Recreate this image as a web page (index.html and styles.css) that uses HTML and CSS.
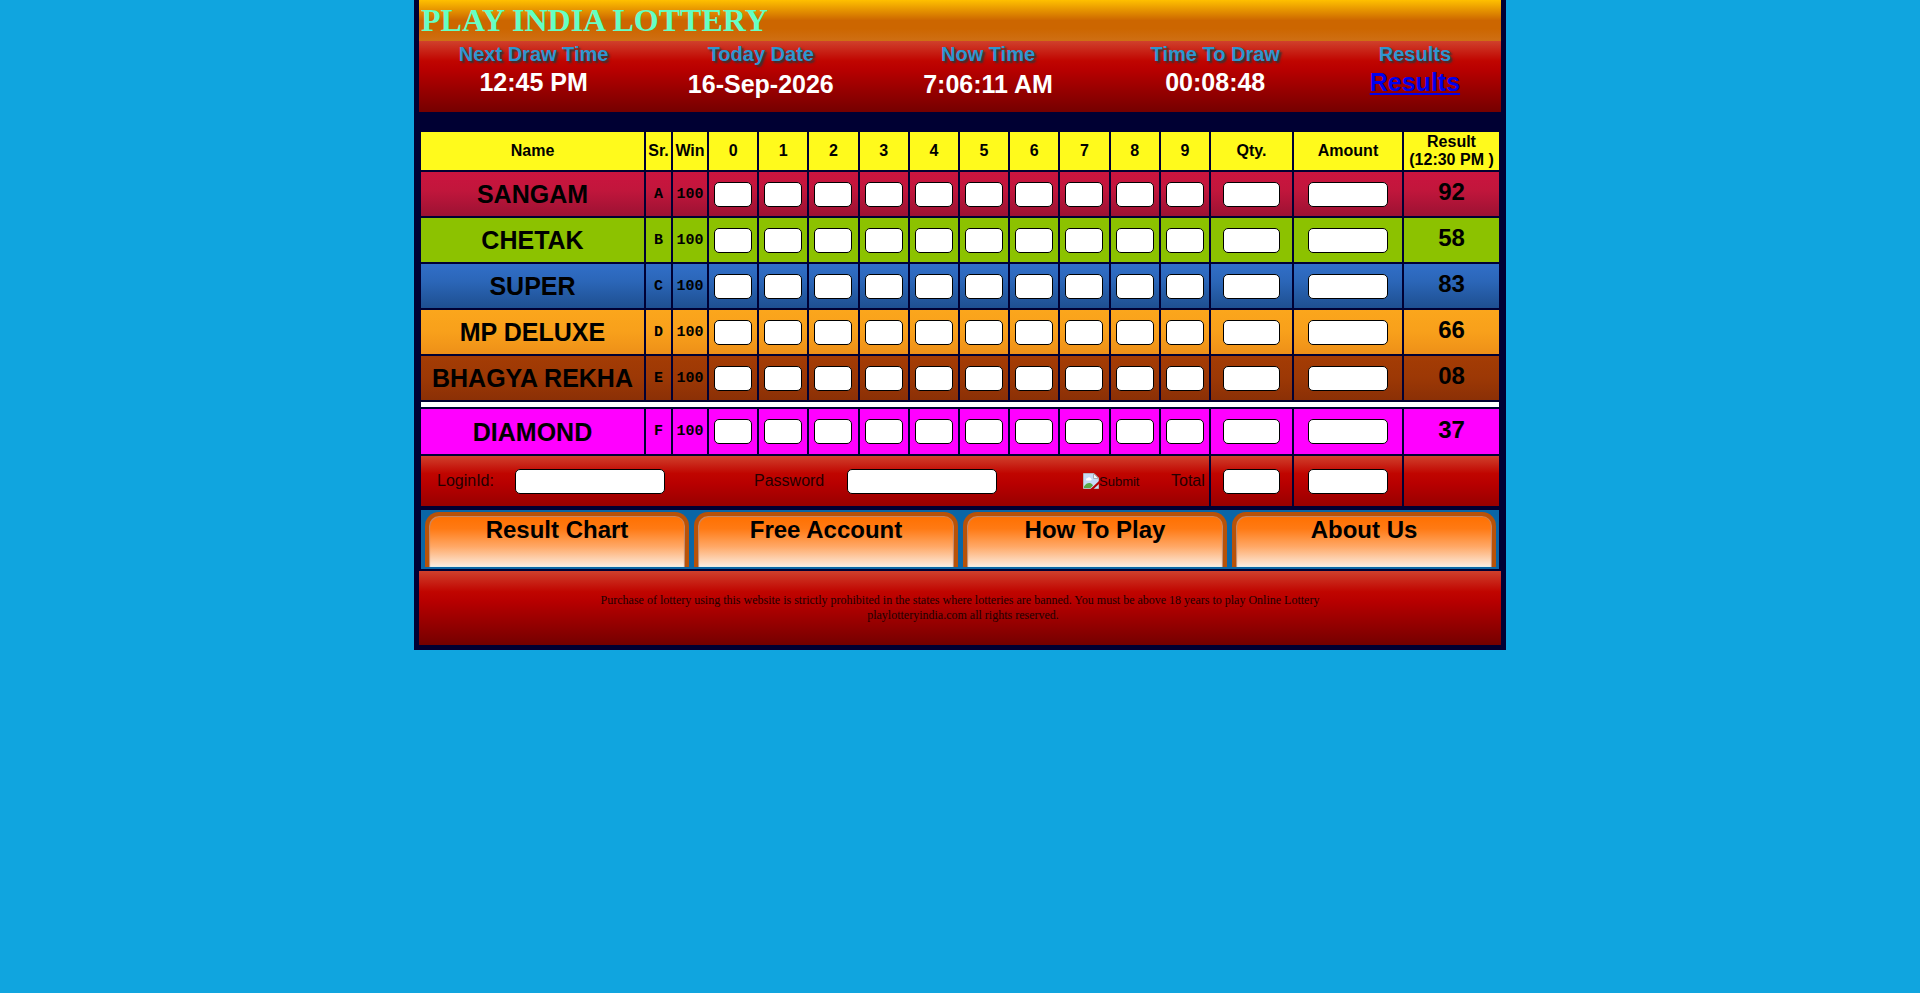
FILE: index.html
```html
<!DOCTYPE html>
<html lang="en">
<head>
<meta charset="utf-8">
<title>Play India Lottery</title>
<link rel="stylesheet" href="styles.css">
</head>
<body>
<main class="page">
  <h1 class="title">PLAY INDIA LOTTERY</h1>
  <section class="stats">
    <div class="stat"><h2 class="stat-label">Next Draw Time</h2><span class="stat-value">12:45 PM</span></div>
    <div class="stat"><h2 class="stat-label">Today Date</h2><span class="stat-value low">16-Sep-2026</span></div>
    <div class="stat"><h2 class="stat-label">Now Time</h2><span class="stat-value low">7:06:11 AM</span></div>
    <div class="stat"><h2 class="stat-label">Time To Draw</h2><span class="stat-value">00:08:48</span></div>
    <div class="stat"><h2 class="stat-label">Results</h2><a class="stat-link" href="#">Results</a></div>
  </section>
  <form>
    <table class="board">
      <colgroup>
        <col class="c-name"><col class="c-sr"><col class="c-win">
        <col span="10">
        <col class="c-qty"><col class="c-amount"><col class="c-result">
      </colgroup>
      <thead>
        <tr><th>Name</th><th>Sr.</th><th>Win</th><th>0</th><th>1</th><th>2</th><th>3</th><th>4</th><th>5</th><th>6</th><th>7</th><th>8</th><th>9</th><th>Qty.</th><th>Amount</th><th>Result<br>(12:30 PM )</th></tr>
      </thead>
      <tbody id="rows"></tbody>
      <tfoot>
        <tr class="login">
          <td colspan="13">
            <div class="login-bar">
              <label class="login-id" for="login">LoginId:</label>
              <input class="box wide" id="login" type="text">
              <label for="pass">Password</label>
              <input class="box wide" id="pass" type="password">
              <button class="submit" type="button">
                <svg width="16" height="16" viewBox="0 0 16 16" aria-hidden="true">
                  <path d="M0.5 0.5H11L15.500 5V15.500H0.500Z" fill="#c6dbf7" stroke="#b4b8bd"/>
                  <path d="M3 6.500a1.500 1.500 0 0 1 1.500-1.500a2 2 0 0 1 3.500 0.500a1.200 1.200 0 0 1 0 2H3.500A1 1 0 0 1 3 6.500Z" fill="#fff"/>
                  <path d="M1 15V13.500C3 10.500 5 9.500 7 10C8.500 10.300 9.500 11.500 10 12.500L7.500 15Z" fill="#5aa845"/>
                  <path d="M10.500 0.500V5.500H15.500Z" fill="#f4f5f7" stroke="#a9aeb4"/>
                  <path d="M16 8L7.500 16H10.500L16 11Z" fill="#b50000"/>
                </svg><span>Submit</span>
              </button>
              <span class="total">Total</span>
            </div>
          </td>
          <td><input class="box qty" type="text" aria-label="Total quantity"></td>
          <td><input class="box amount" type="text" aria-label="Total amount"></td>
          <td></td>
        </tr>
      </tfoot>
    </table>
  </form>
  <nav class="tabs">
    <a class="tab" href="#">Result Chart</a>
    <a class="tab" href="#">Free Account</a>
    <a class="tab" href="#">How To Play</a>
    <a class="tab" href="#">About Us</a>
  </nav>
  <footer class="foot">Purchase of lottery using this website is strictly prohibited in the states where lotteries are banned. You must be above 18 years to play Online Lottery<br>&nbsp;&nbsp;playlotteryindia.com all rights reserved.</footer>
</main>
<script src="board.js"></script>
</body>
</html>
```
FILE: styles.css
```css
body {
  margin: 0;
  background: #10a5df;
  font-family: "Liberation Sans", Arial, sans-serif;
}
.page {
  box-sizing: border-box;
  width: 100%;
  max-width: 1092px;
  margin: 0 auto;
  border: solid #000033;
  border-width: 0 5px 5px;
  background: #000033;
}
.title {
  margin: 0;
  padding: 2px;
  background: linear-gradient(#ffc000, #cc6600 50%, #cc6600 70%, #cf6f14);
  color: #66ffc4;
  font: bold 32px/37px "Liberation Serif", "Times New Roman", serif;
}
.stats, .login td, .foot {
  background: linear-gradient(#d0402c, #c00500 28%, #b80000 40%, #750000);
}
.stats {
  display: grid;
  grid-template-columns: repeat(4, 227fr) 172fr;
  min-height: 71px;
  padding-left: 1px;
  text-align: center;
  font-weight: bold;
}
.stat-label {
  margin: 0;
  padding: 1px 0 2px;
  font-size: 20px;
  line-height: 24px;
  color: #2d96cf;
  text-shadow: 2px 2px 2px #333333;
}
.stat-value, .stat-link {
  display: block;
  font-size: 25px;
  line-height: 29px;
  color: #ffffff;
}
.stat-value.low {
  padding-top: 2px;
}
.stat-link {
  color: #0000ee;
}
.board {
  width: 100%;
  margin-top: 18px;
  border-spacing: 2px;
  table-layout: fixed;
  text-align: center;
}
.board th, .board td {
  padding: 0;
}
.c-name { width: 223px; }
.c-sr { width: 25px; }
.c-win { width: 34px; }
.c-qty { width: 81px; }
.c-amount { width: 108px; }
.c-result { width: 95px; }
.board th {
  height: 38px;
  background: #fffa1c;
  font-size: 16px;
  line-height: 18px;
}
.game td { height: 44px; }
.game .name {
  font-size: 25px;
  font-weight: bold;
}
.game .code {
  font: bold 15px "Liberation Mono", "Courier New", monospace;
}
.game .result {
  padding-bottom: 4px;
  height: 40px;
  font-size: 24px;
  font-weight: bold;
}
.sangam td { background: linear-gradient(#ca143f, #c2163c 40%, #9c1233); }
.chetak td { background: #8cc200; }
.super td { background: linear-gradient(#316fc8, #2b66b8 40%, #1e4f90); }
.deluxe td { background: linear-gradient(#fba61c, #f8a01b 50%, #ee9018); }
.rekha td { background: linear-gradient(#a43c04, #9c3805 50%, #8b3006); }
.diamond td { background: #ff00ff; height: 45px; }
.diamond .name { padding-top: 1px; height: 44px; }
.diamond .result { height: 41px; }
.board .rule {
  height: 5px;
  background: #ffffff;
}
.box {
  box-sizing: border-box;
  display: block;
  width: 38px;
  height: 25px;
  margin: 0 auto;
  padding: 1px 4px;
  border: 1px solid #000000;
  border-radius: 5px;
  background: #ffffff;
}
.box.qty { width: 57px; }
.box.amount { width: 80px; }
.box.wide { width: 150px; margin: 0; }
.login td {
  height: 50px;
  background: linear-gradient(#d0402c, #c00500 35%, #b80000 55%, #980000);
}
.login .login-bar {
  display: grid;
  grid-template-columns: 94fr 239fr 93fr 236fr 88fr 38fr;
  align-items: center;
  text-align: left;
  color: #240000;
  font-size: 16px;
}
.login-id { padding-left: 16px; }
.submit {
  display: flex;
  align-items: center;
  padding: 0;
  border: 0;
  background: none;
  color: #240000;
  font: 13px "Liberation Sans", Arial, sans-serif;
}
.tabs {
  display: grid;
  grid-template-columns: repeat(4, 1fr);
  gap: 5px;
  margin: 2px 2px 0;
  padding: 2px 3px 2px 4px;
  background: #0a66a6;
}
.tab {
  box-sizing: border-box;
  height: 55px;
  border: solid #b85208;
  border-width: 4px 4px 0;
  border-radius: 14px 14px 0 0;
  background: linear-gradient(#ff7000, #ff7a14 25%, #ffa866 60%, #fce8d8 97%, #e4ffff);
  box-shadow: inset 1px 1px 1px #c08a70, inset -1px 0 1px #c08a70;
  color: #000000;
  font-size: 24px;
  font-weight: bold;
  line-height: 27px;
  text-align: center;
  text-decoration: none;
}
.foot {
  margin-top: 2px;
  padding: 22px 0;
  color: #200000;
  font: 12px/15px "Liberation Serif", "Times New Roman", serif;
  text-align: center;
}
```
FILE: board.js
```js
const games = [
  ["SANGAM", "A", "92", "sangam"],
  ["CHETAK", "B", "58", "chetak"],
  ["SUPER", "C", "83", "super"],
  ["MP DELUXE", "D", "66", "deluxe"],
  ["BHAGYA REKHA", "E", "08", "rekha"],
  ["DIAMOND", "F", "37", "diamond"]
];

const field = (label, size) =>
  `<td><input class="box ${size}" type="text" aria-label="${label}"></td>`;

document.getElementById("rows").innerHTML = games.map(([name, code, result, style]) => {
  const digits = Array.from({ length: 10 }, (_, n) => field(`${name} ${n}`, "digit")).join("");
  const rule = style === "diamond" ? '<tr><td class="rule" colspan="16"></td></tr>' : "";
  return `${rule}<tr class="game ${style}"><td class="name">${name}</td><td class="code">${code}</td><td class="code">100</td>${digits}${field(name + " quantity", "qty")}${field(name + " amount", "amount")}<td class="result">${result}</td></tr>`;
}).join("");
```
